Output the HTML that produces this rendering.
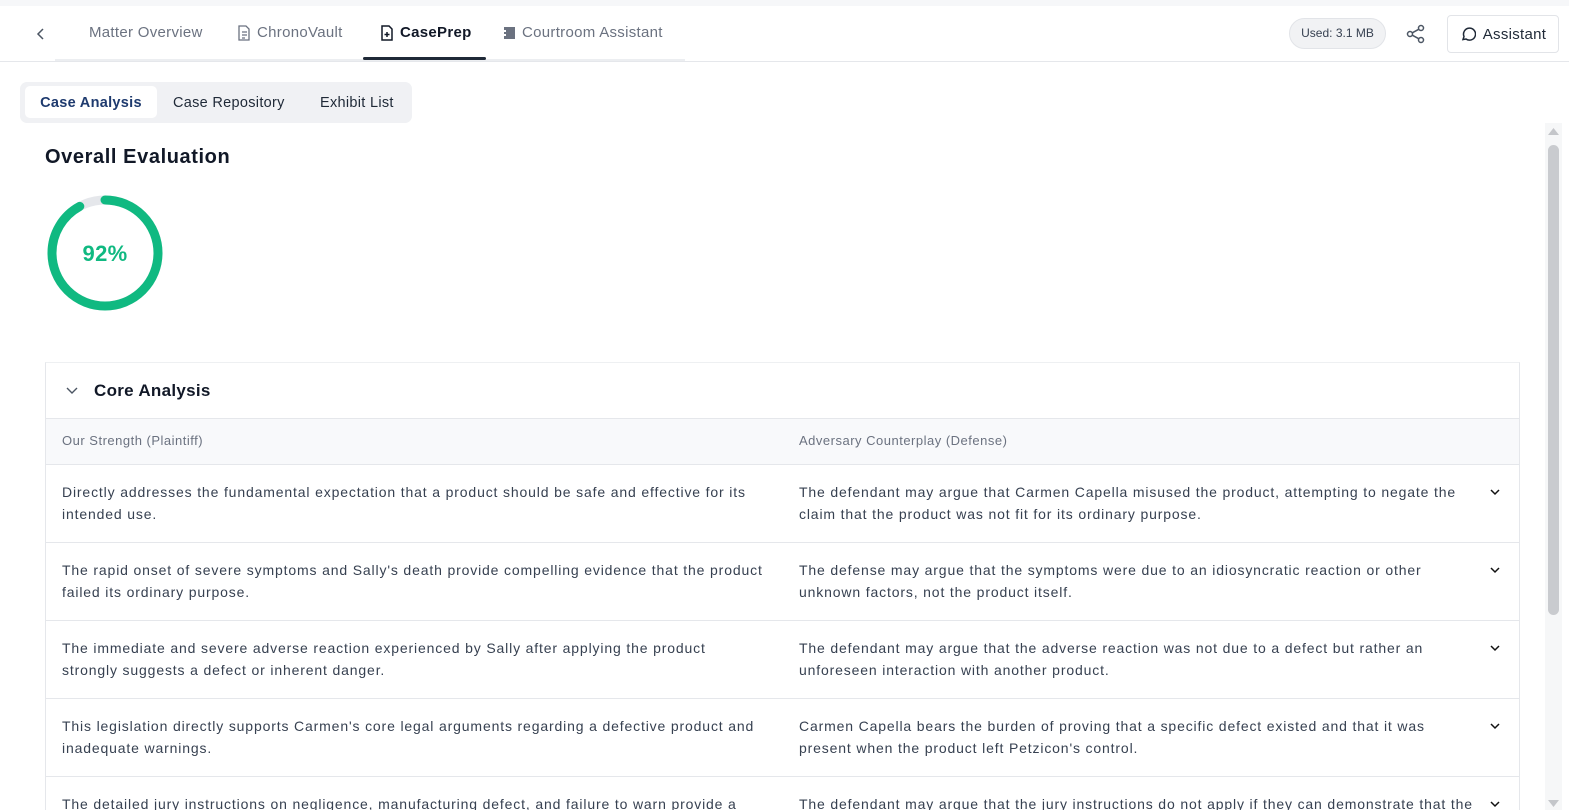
<!DOCTYPE html>
<html style="overflow:hidden;height:810px"><head><style>
*{box-sizing:border-box;margin:0;padding:0}
body{width:1569px;height:810px;overflow:hidden;background:#fff;font-family:"Liberation Sans",sans-serif;color:#1f2937;position:relative;letter-spacing:0.3px}
.top{position:absolute;left:0;top:0;width:1569px;height:6px;background:#f6f7f9}
.hdr{position:absolute;left:0;top:6px;width:1569px;height:56px;border-bottom:1px solid #e5e7eb}
.tabline{position:absolute;left:55px;top:59px;width:630px;height:2px;background:#eceef1}
.nav{position:absolute;top:24px;font-size:15px;color:#6b7280;display:flex;align-items:center;gap:6px;white-space:nowrap}
.act{position:absolute;left:363px;top:57px;width:123px;height:3px;background:#1f2937;border-radius:2px}
.pill{position:absolute;left:1289px;top:18px;width:97px;height:31px;border:1px solid #e2e4e8;background:#f1f2f4;border-radius:16px;font-size:12px;color:#374151;text-align:center;line-height:29px;letter-spacing:0}
.abtn{position:absolute;left:1447px;top:15px;width:112px;height:38px;border:1px solid #e2e4e8;border-radius:4px;font-size:15px;color:#1f2937;display:flex;align-items:center;justify-content:center;gap:7px}
.seg{position:absolute;left:20px;top:82px;width:392px;height:41px;background:#f0f1f4;border-radius:7px}
.seg div{position:absolute;top:4px;height:32px;line-height:34px;font-size:14.5px;color:#1f2937;white-space:nowrap}
.h1{position:absolute;left:45px;top:146px;font-size:20px;font-weight:bold;color:#111827;letter-spacing:0.6px}
.card{position:absolute;left:45px;top:362px;width:1475px;height:448px;overflow:hidden;border:1px solid #e5e7eb;border-bottom:none;border-top-color:#eef0f2}
.ch{height:56px;border-bottom:1px solid #e5e7eb;display:flex;align-items:center;padding-left:48px;font-size:17px;font-weight:bold;color:#111827}
.th{height:46px;background:#f8f9fb;border-bottom:1px solid #e5e7eb;position:relative;font-size:13px;color:#6b7280;letter-spacing:0.5px}
.th span,.row span{position:absolute;white-space:nowrap}
.row{height:78px;border-bottom:1px solid #e5e7eb;position:relative;font-size:14px;line-height:22px;color:#374151;letter-spacing:0.85px}
.row .l{left:16px;top:16px}
.row .r{left:753px;top:16px}
.row svg{position:absolute;left:1443px;top:23px}
.sb{position:absolute;left:1545px;top:123px;width:17px;height:687px;background:#f6f7f8}
</style></head><body>
<div class="top"></div>
<div class="hdr"></div>
<div class="tabline"></div>
<svg style="position:absolute;left:35px;top:27px" width="12" height="14" viewBox="0 0 12 14"><path d="M8 2L3 7l5 5" stroke="#4b5563" stroke-width="1.5" fill="none"/></svg>
<div class="nav" style="left:89px">Matter Overview</div>
<div class="nav" style="left:237px"><svg width="14" height="16" viewBox="0 0 14 16"><path d="M2 1h7l3 3v11H2z M5 7h5M5 10h5M5 13h3" stroke="#6b7280" stroke-width="1.3" fill="none"/></svg>ChronoVault</div>
<div class="nav" style="left:380px;color:#111827;font-weight:bold"><svg width="14" height="16" viewBox="0 0 14 16"><path d="M2 1h7l3 3v11H2z M7 7v5M4.5 9.5h5" stroke="#111827" stroke-width="1.5" fill="none"/></svg>CasePrep</div>
<div class="nav" style="left:502px"><svg width="14" height="14" viewBox="0 0 14 14"><rect x="2" y="1" width="11" height="12" fill="#6b7280"/><rect x="1" y="4" width="3" height="2" fill="#fff"/><rect x="1" y="8" width="3" height="2" fill="#fff"/></svg>Courtroom Assistant</div>
<div class="act"></div>
<div class="pill">Used: 3.1 MB</div>
<svg style="position:absolute;left:1406px;top:24px" width="20" height="20" viewBox="0 0 20 20" fill="none" stroke="#4b5563" stroke-width="1.5"><circle cx="15" cy="4" r="2.5"/><circle cx="4" cy="10" r="2.5"/><circle cx="15" cy="16" r="2.5"/><path d="M6.3 8.8l6.4-3.5M6.3 11.2l6.4 3.5"/></svg>
<div class="abtn"><svg width="16" height="16" viewBox="0 0 16 16" fill="none" stroke="#1f2937" stroke-width="1.5"><path d="M3 13.5l1-3A6 6 0 1 1 6 13z"/></svg>Assistant</div>
<div class="seg">
<div style="left:5px;width:132px;background:#fff;border-radius:5px;text-align:center;color:#1e3a6e;font-weight:bold">Case Analysis</div>
<div style="left:153px">Case Repository</div>
<div style="left:300px">Exhibit List</div>
</div>
<div class="h1">Overall Evaluation</div>
<svg style="position:absolute;left:45px;top:193px" width="120" height="120" viewBox="0 0 120 120"><circle cx="60" cy="60" r="53" fill="none" stroke="#e5e7eb" stroke-width="9"/><circle cx="60" cy="60" r="53" fill="none" stroke="#10b981" stroke-width="9" stroke-dasharray="306.4 333" stroke-linecap="round" transform="rotate(-90 60 60)"/><text x="60" y="68" text-anchor="middle" font-family="Liberation Sans" font-size="22" font-weight="bold" fill="#10b981">92%</text></svg>
<div class="card">
<div class="ch"><svg style="position:absolute;left:20px;top:23px" width="12" height="10" viewBox="0 0 12 10"><path d="M1 2l5 5 5-5" stroke="#4b5563" stroke-width="1.4" fill="none"/></svg>Core Analysis</div>
<div class="th"><span style="left:16px;top:14px">Our Strength (Plaintiff)</span><span style="left:753px;top:14px">Adversary Counterplay (Defense)</span></div>
<div class="row"><span class="l">Directly addresses the fundamental expectation that a product should be safe and effective for its<br>intended use.</span><span class="r">The defendant may argue that Carmen Capella misused the product, attempting to negate the<br>claim that the product was not fit for its ordinary purpose.</span><svg width="12" height="8" viewBox="0 0 12 8"><path d="M2 2l4 4 4-4" stroke="#111" stroke-width="1.5" fill="none"/></svg></div>
<div class="row"><span class="l">The rapid onset of severe symptoms and Sally's death provide compelling evidence that the product<br>failed its ordinary purpose.</span><span class="r">The defense may argue that the symptoms were due to an idiosyncratic reaction or other<br>unknown factors, not the product itself.</span><svg width="12" height="8" viewBox="0 0 12 8"><path d="M2 2l4 4 4-4" stroke="#111" stroke-width="1.5" fill="none"/></svg></div>
<div class="row"><span class="l">The immediate and severe adverse reaction experienced by Sally after applying the product<br>strongly suggests a defect or inherent danger.</span><span class="r">The defendant may argue that the adverse reaction was not due to a defect but rather an<br>unforeseen interaction with another product.</span><svg width="12" height="8" viewBox="0 0 12 8"><path d="M2 2l4 4 4-4" stroke="#111" stroke-width="1.5" fill="none"/></svg></div>
<div class="row"><span class="l">This legislation directly supports Carmen's core legal arguments regarding a defective product and<br>inadequate warnings.</span><span class="r">Carmen Capella bears the burden of proving that a specific defect existed and that it was<br>present when the product left Petzicon's control.</span><svg width="12" height="8" viewBox="0 0 12 8"><path d="M2 2l4 4 4-4" stroke="#111" stroke-width="1.5" fill="none"/></svg></div>
<div class="row"><span class="l">The detailed jury instructions on negligence, manufacturing defect, and failure to warn provide a<br>clear framework.</span><span class="r">The defendant may argue that the jury instructions do not apply if they can demonstrate that the<br>product was altered.</span><svg width="12" height="8" viewBox="0 0 12 8"><path d="M2 2l4 4 4-4" stroke="#111" stroke-width="1.5" fill="none"/></svg></div>
</div>
<div class="sb"><svg style="position:absolute;left:2px;top:4px" width="13" height="9" viewBox="0 0 13 9"><path d="M1 8L6.5 1 12 8z" fill="#c4c6ca"/></svg><div style="position:absolute;left:3px;top:22px;width:11px;height:470px;background:#c9cbcf;border-radius:6px"></div><svg style="position:absolute;left:2px;top:676px" width="13" height="9" viewBox="0 0 13 9"><path d="M1 1L6.5 8 12 1z" fill="#c4c6ca"/></svg></div>
</body></html>
